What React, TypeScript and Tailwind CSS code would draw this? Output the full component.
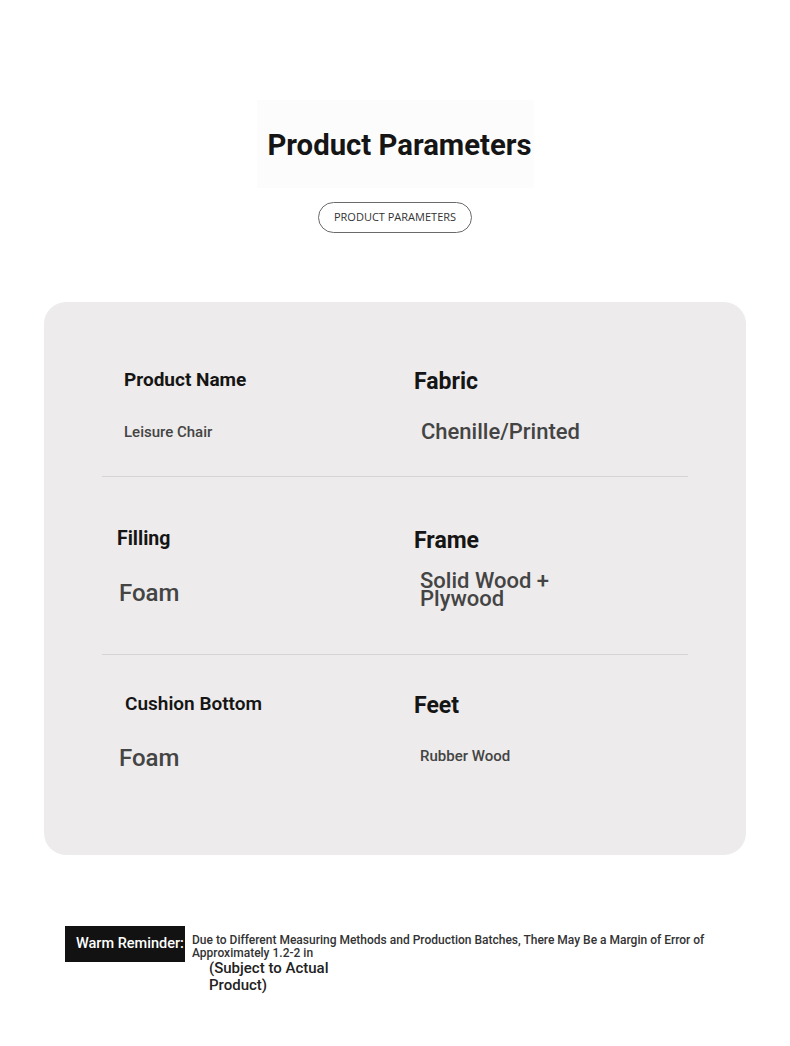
const rows = [
  {
    h: "h-[175px]",
    left: {
      label: "Product Name",
      labelCls: "pt-[66px] pl-[22px] text-[19px] leading-[24px] font-bold",
      value: "Leisure Chair",
      valueCls: "mt-[30px] pl-[22px] text-[15px] leading-[20px] font-medium",
    },
    right: {
      label: "Fabric",
      labelCls: "pt-[66px] pl-[19px] text-[23px] leading-[28px] font-bold",
      value: "Chenille/Printed",
      valueCls: "mt-[22px] pl-[26px] text-[22px] leading-[28px] font-medium",
    },
  },
  {
    h: "h-[178px]",
    left: {
      label: "Filling",
      labelCls: "pt-[50px] pl-[15px] text-[19.5px] leading-[24px] font-bold",
      value: "Foam",
      valueCls: "mt-[27px] pl-[17px] text-[24px] leading-[30px] font-medium",
    },
    right: {
      label: "Frame",
      labelCls: "pt-[50px] pl-[19px] text-[23px] leading-[28px] font-bold",
      value: "Solid Wood + Plywood",
      valueCls: "mt-[17px] pl-[25px] w-[170px] text-[22px] leading-[18px] font-medium",
    },
  },
  {
    h: "h-[200px]",
    left: {
      label: "Cushion Bottom",
      labelCls: "pt-[37px] pl-[23px] text-[19px] leading-[24px] font-semibold",
      value: "Foam",
      valueCls: "mt-[27px] pl-[17px] text-[24px] leading-[30px] font-medium",
    },
    right: {
      label: "Feet",
      labelCls: "pt-[37px] pl-[19px] text-[23px] leading-[28px] font-bold",
      value: "Rubber Wood",
      valueCls: "mt-[26px] pl-[25px] text-[15px] leading-[20px] font-medium",
    },
  },
];

type Cell = { label: string; labelCls: string; value: string; valueCls: string };

const ParamCell = ({ cell }: { cell: Cell }) => (
  <div className="flex flex-col">
    <div className={`text-[#151515] ${cell.labelCls}`}>{cell.label}</div>
    <div className={`text-[#444444] ${cell.valueCls}`}>{cell.value}</div>
  </div>
);

export default function App() {
  return (
    <div className="min-h-screen w-[790px] bg-white font-['Roboto',sans-serif] pt-[100px] pb-10">
      {/* Title */}
      <div className="flex flex-col items-center">
        <div className="w-[277px] h-[88px] bg-[#fcfcfc] flex items-center justify-center pt-[3px] pl-[9px]">
          <h1 className="text-[29.3px] leading-none font-bold text-[#151515] whitespace-nowrap">
            Product Parameters
          </h1>
        </div>
        <div className="mt-[14px] w-[154px] h-[31px] rounded-full border border-[#6a6a6a] flex items-center justify-center font-['Open_Sans',sans-serif] text-[11px] text-[#333333]">
          PRODUCT PARAMETERS
        </div>
      </div>

      {/* Card */}
      <div className="mt-[69px] mx-[44px] h-[553px] rounded-[22px] bg-[#edebeb] px-[58px]">
        {rows.map((row, i) => (
          <div
            key={i}
            className={`grid grid-cols-2 ${row.h} ${i < rows.length - 1 ? "border-b border-[#d6d4d4]" : ""}`}
          >
            <ParamCell cell={row.left} />
            <ParamCell cell={row.right} />
          </div>
        ))}
      </div>

      {/* Reminder */}
      <div className="mt-[71px] ml-[65px] flex items-start">
        <div className="w-[120px] h-[36px] bg-[#121212] flex items-center pl-[11px] shrink-0">
          <span className="text-white text-[14.5px] font-medium whitespace-nowrap">Warm Reminder:</span>
        </div>
        <div className="flex flex-col">
          <p className="mt-[8px] ml-[7px] w-[533px] text-[12px] leading-[13px] font-medium text-[#333333]">
            Due to Different Measuring Methods and Production Batches, There May Be a Margin of Error of Approximately 1.2-2 in
          </p>
          <p className="ml-[24px] w-[130px] text-[15px] leading-[17px] font-medium text-[#222222]">
            (Subject to Actual Product)
          </p>
        </div>
      </div>
    </div>
  );
}
